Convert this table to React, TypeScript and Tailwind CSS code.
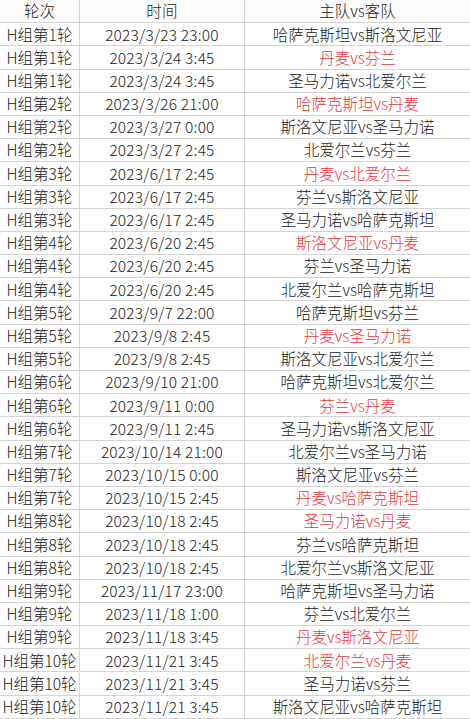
const rows: [string, string, string, boolean][] = [
  ["H组第1轮", "2023/3/23 23:00", "哈萨克斯坦vs斯洛文尼亚", false],
  ["H组第1轮", "2023/3/24 3:45", "丹麦vs芬兰", true],
  ["H组第1轮", "2023/3/24 3:45", "圣马力诺vs北爱尔兰", false],
  ["H组第2轮", "2023/3/26 21:00", "哈萨克斯坦vs丹麦", true],
  ["H组第2轮", "2023/3/27 0:00", "斯洛文尼亚vs圣马力诺", false],
  ["H组第2轮", "2023/3/27 2:45", "北爱尔兰vs芬兰", false],
  ["H组第3轮", "2023/6/17 2:45", "丹麦vs北爱尔兰", true],
  ["H组第3轮", "2023/6/17 2:45", "芬兰vs斯洛文尼亚", false],
  ["H组第3轮", "2023/6/17 2:45", "圣马力诺vs哈萨克斯坦", false],
  ["H组第4轮", "2023/6/20 2:45", "斯洛文尼亚vs丹麦", true],
  ["H组第4轮", "2023/6/20 2:45", "芬兰vs圣马力诺", false],
  ["H组第4轮", "2023/6/20 2:45", "北爱尔兰vs哈萨克斯坦", false],
  ["H组第5轮", "2023/9/7 22:00", "哈萨克斯坦vs芬兰", false],
  ["H组第5轮", "2023/9/8 2:45", "丹麦vs圣马力诺", true],
  ["H组第5轮", "2023/9/8 2:45", "斯洛文尼亚vs北爱尔兰", false],
  ["H组第6轮", "2023/9/10 21:00", "哈萨克斯坦vs北爱尔兰", false],
  ["H组第6轮", "2023/9/11 0:00", "芬兰vs丹麦", true],
  ["H组第6轮", "2023/9/11 2:45", "圣马力诺vs斯洛文尼亚", false],
  ["H组第7轮", "2023/10/14 21:00", "北爱尔兰vs圣马力诺", false],
  ["H组第7轮", "2023/10/15 0:00", "斯洛文尼亚vs芬兰", false],
  ["H组第7轮", "2023/10/15 2:45", "丹麦vs哈萨克斯坦", true],
  ["H组第8轮", "2023/10/18 2:45", "圣马力诺vs丹麦", true],
  ["H组第8轮", "2023/10/18 2:45", "芬兰vs哈萨克斯坦", false],
  ["H组第8轮", "2023/10/18 2:45", "北爱尔兰vs斯洛文尼亚", false],
  ["H组第9轮", "2023/11/17 23:00", "哈萨克斯坦vs圣马力诺", false],
  ["H组第9轮", "2023/11/18 1:00", "芬兰vs北爱尔兰", false],
  ["H组第9轮", "2023/11/18 3:45", "丹麦vs斯洛文尼亚", true],
  ["H组第10轮", "2023/11/21 3:45", "北爱尔兰vs丹麦", true],
  ["H组第10轮", "2023/11/21 3:45", "圣马力诺vs芬兰", false],
  ["H组第10轮", "2023/11/21 3:45", "斯洛文尼亚vs哈萨克斯坦", false],
];

function Row({ cells, red, header }: { cells: string[]; red?: boolean; header?: boolean }) {
  return (
    <div className={`grid grid-cols-[80px_165px_1fr] h-[23.2px] border-b border-[#d4d4d4] ${header ? "bg-[#fbfbfb]" : ""}`}>
      <div className="flex items-center justify-center border-r border-[#d4d4d4] text-[#222]">{cells[0]}</div>
      <div className="flex items-center justify-center border-r border-[#d4d4d4] text-[#222] tracking-[0.2px]">{cells[1]}</div>
      <div className={`flex items-center justify-center ${red ? "text-[#e5383b]" : "text-[#222]"}`}>{cells[2]}</div>
    </div>
  );
}

export default function App() {
  return (
    <div className="w-[470px] h-[719px] overflow-hidden bg-white font-['Noto_Sans_CJK_SC',sans-serif] font-light text-[15.5px] leading-none">
      <Row header cells={["轮次", "时间", "主队vs客队"]} />
      {rows.map((r, i) => (
        <Row key={i} cells={[r[0], r[1], r[2]]} red={r[3]} />
      ))}
    </div>
  );
}
